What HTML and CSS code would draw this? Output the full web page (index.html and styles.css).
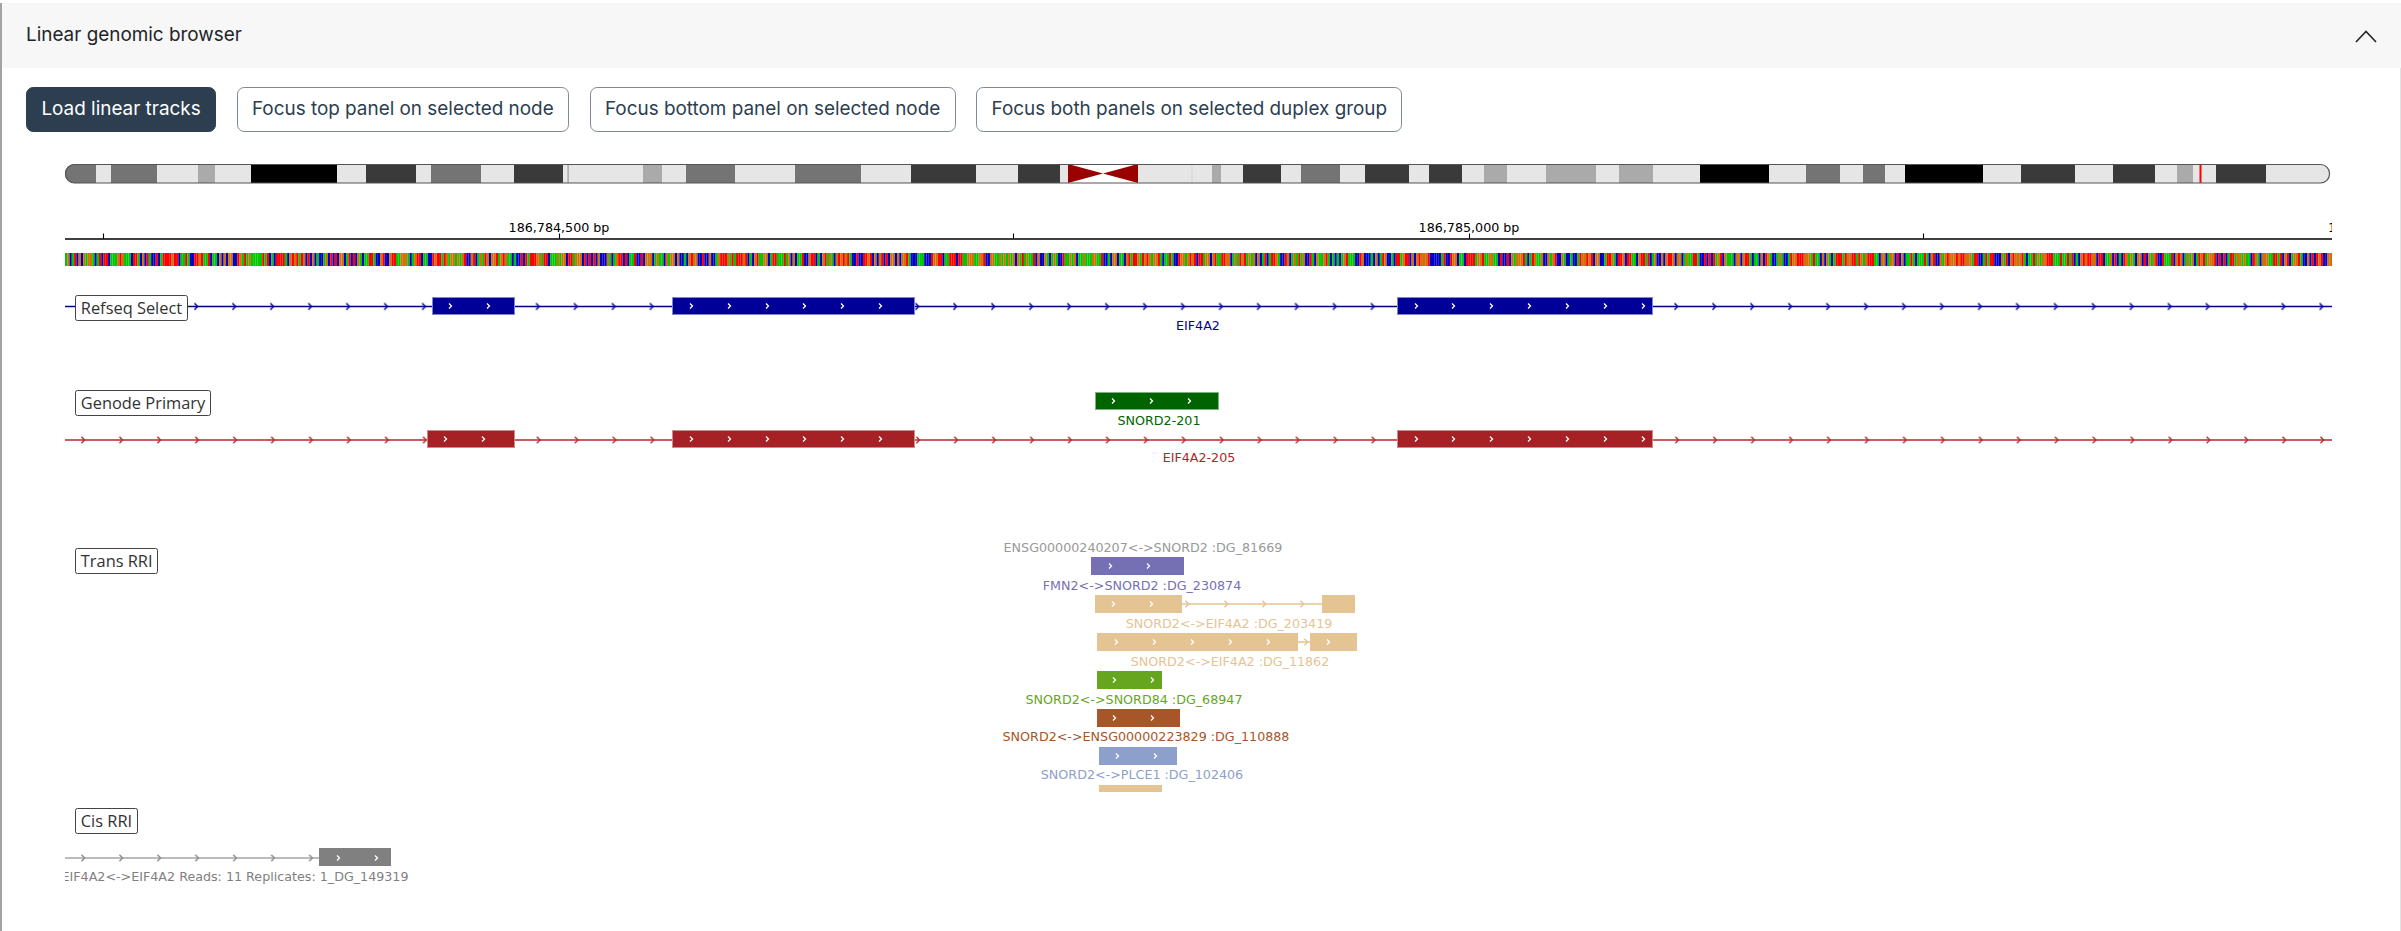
FILE: index.html
```html
<!DOCTYPE html>
<html lang="en">
<head>
<meta charset="utf-8">
<title>Linear genomic browser</title>
<link rel="stylesheet" href="styles.css">
</head>
<body>
<div class="accordion">
  <div class="acc-header">
    <span class="acc-title">Linear genomic browser</span>
    <svg class="chev" width="22" height="13" viewBox="0 0 22 13"><path d="M1 12 L11 1.5 L21 12" fill="none" stroke="#212529" stroke-width="1.6"/></svg>
  </div>
  <div class="acc-body">
    <div class="btn-row">
      <button class="btn btn-dark">Load linear tracks</button>
      <button class="btn btn-outline">Focus top panel on selected node</button>
      <button class="btn btn-outline">Focus bottom panel on selected node</button>
      <button class="btn btn-outline">Focus both panels on selected duplex group</button>
    </div>

    <div class="igv">
      <!-- ideogram -->
      <div class="track t-ideo">
        <svg width="2350" height="30" viewBox="26 159 2350 30">
          <defs>
            <clipPath id="ideoClip"><rect x="65" y="164" width="2265" height="19" rx="9.5"/></clipPath>
            <clipPath id="viewClip"><rect x="65" y="0" width="2267" height="2000"/></clipPath>
            <clipPath id="transClip"><rect x="65" y="538" width="2267" height="254"/></clipPath>
            <pattern id="arrBlue" patternUnits="userSpaceOnUse" x="193" y="302.5" width="37.95" height="8">
              <path d="M1.5 0.8 L4.6 4 L1.5 7.2" fill="none" stroke="#00008b" stroke-width="1.4"/>
            </pattern>
            <pattern id="arrRed" patternUnits="userSpaceOnUse" x="80" y="436" width="37.95" height="8">
              <path d="M1.5 0.8 L4.6 4 L1.5 7.2" fill="none" stroke="#b52a2e" stroke-width="1.4"/>
            </pattern>
            <pattern id="arrGray" patternUnits="userSpaceOnUse" x="80" y="854" width="37.95" height="8">
              <path d="M1.5 0.8 L4.6 4 L1.5 7.2" fill="none" stroke="#8a8a8a" stroke-width="1.4"/>
            </pattern>
          </defs>
          <g clip-path="url(#ideoClip)">
            <rect x="65" y="164" width="2265" height="19" fill="#e6e6e6"/>
            <g fill="#747474">
              <rect x="65" y="164" width="31" height="19"/>
              <rect x="111" y="164" width="46" height="19"/>
              <rect x="431" y="164" width="50" height="19"/>
              <rect x="686" y="164" width="49" height="19"/>
              <rect x="795" y="164" width="66" height="19"/>
              <rect x="1301" y="164" width="39" height="19"/>
              <rect x="1806" y="164" width="34" height="19"/>
              <rect x="1863" y="164" width="22" height="19"/>
            </g>
            <g fill="#aaaaaa">
              <rect x="198" y="164" width="17" height="19"/>
              <rect x="643" y="164" width="19" height="19"/>
              <rect x="1212" y="164" width="9" height="19"/>
              <rect x="1484" y="164" width="23" height="19"/>
              <rect x="1546" y="164" width="50" height="19"/>
              <rect x="1619" y="164" width="34" height="19"/>
              <rect x="2177" y="164" width="16" height="19"/>
            </g>
            <g fill="#000000">
              <rect x="251" y="164" width="86" height="19"/>
              <rect x="1700" y="164" width="69" height="19"/>
              <rect x="1905" y="164" width="78" height="19"/>
            </g>
            <g fill="#3a3a3a">
              <rect x="366" y="164" width="50" height="19"/>
              <rect x="514" y="164" width="49" height="19"/>
              <rect x="911" y="164" width="65" height="19"/>
              <rect x="1018" y="164" width="42" height="19"/>
              <rect x="1243" y="164" width="38" height="19"/>
              <rect x="1365" y="164" width="44" height="19"/>
              <rect x="1429" y="164" width="33" height="19"/>
              <rect x="2021" y="164" width="54" height="19"/>
              <rect x="2113" y="164" width="42" height="19"/>
              <rect x="2216" y="164" width="50" height="19"/>
            </g>
            <rect x="567.5" y="164" width="1.2" height="19" fill="#9a9a9a"/>
            <rect x="1191.5" y="164" width="1" height="19" fill="#d4d4d4"/>
            <rect x="1068" y="164" width="70" height="19" fill="#ffffff"/>
            <polygon points="1068,164 1068,183 1103,173.5" fill="#990000"/>
            <polygon points="1138,164 1138,183 1103,173.5" fill="#990000"/>
            <rect x="2199.5" y="164" width="2" height="19" fill="#ff0000"/>
          </g>
          <rect x="65.5" y="164.5" width="2264" height="18.5" rx="9" fill="none" stroke="#555555" stroke-width="1.2"/>
        </svg>
      </div>

      <!-- ruler -->
      <div class="track t-ruler">
        <svg width="2350" height="58" viewBox="26 189 2350 58">
          <g clip-path="url(#viewClip)" class="cv">
            <line x1="65" y1="239" x2="2332" y2="239" stroke="#000" stroke-width="1.4"/>
            <path d="M103.5 233.5V239M559.5 233.5V239M1013.5 233.5V239M1469.5 233.5V239M1923.5 233.5V239" stroke="#000" stroke-width="1.1"/>
            <text x="559" y="231.5" text-anchor="middle" fill="#000">186,784,500 bp</text>
            <text x="1469" y="231.5" text-anchor="middle" fill="#000">186,785,000 bp</text>
            <text x="2328" y="231.5" fill="#000">186,785,500 bp</text>
          </g>
        </svg>
      </div>

      <!-- sequence -->
      <div class="track t-seq">
        <svg width="2350" height="38" viewBox="26 247 2350 38">
          <g id="seq" clip-path="url(#viewClip)"></g>
        </svg>
      </div>

      <!-- Refseq Select -->
      <div class="track t-refseq">
        <svg width="2350" height="95" viewBox="26 285 2350 95">
          <g clip-path="url(#viewClip)" class="cv">
            <line x1="65" y1="306.5" x2="2332" y2="306.5" stroke="#000080" stroke-width="1.7"/>
            <rect x="65" y="302.5" width="2267" height="8" fill="url(#arrBlue)"/>
            <g fill="#000099" stroke="#8585cf" stroke-width="1">
              <rect x="432.5" y="297.5" width="82" height="17"/>
              <rect x="672.5" y="297.5" width="242" height="17"/>
              <rect x="1397.5" y="297.5" width="255" height="17"/>
            </g>
            <path fill="none" stroke="#fff" stroke-width="1.3" d="M449 303.5l2.5 2.5l-2.5 2.5M487 303.5l2.5 2.5l-2.5 2.5M690 303.5l2.5 2.5l-2.5 2.5M728 303.5l2.5 2.5l-2.5 2.5M766 303.5l2.5 2.5l-2.5 2.5M803 303.5l2.5 2.5l-2.5 2.5M841 303.5l2.5 2.5l-2.5 2.5M879 303.5l2.5 2.5l-2.5 2.5M1415 303.5l2.5 2.5l-2.5 2.5M1452 303.5l2.5 2.5l-2.5 2.5M1490 303.5l2.5 2.5l-2.5 2.5M1528 303.5l2.5 2.5l-2.5 2.5M1566 303.5l2.5 2.5l-2.5 2.5M1604 303.5l2.5 2.5l-2.5 2.5M1642 303.5l2.5 2.5l-2.5 2.5"/>
            <text x="1198" y="329.6" text-anchor="middle" fill="#000099">EIF4A2</text>
          </g>
        </svg>
        <div class="track-label">Refseq Select</div>
      </div>

      <!-- Genode Primary -->
      <div class="track t-genode">
        <svg width="2350" height="158" viewBox="26 380 2350 158">
          <g clip-path="url(#viewClip)" class="cv">
            <rect x="1095.5" y="392.5" width="123" height="17" fill="#006400" stroke="#7fb27f" stroke-width="1"/>
            <path fill="none" stroke="#fff" stroke-width="1.3" d="M1112 398.5l2.5 2.5l-2.5 2.5M1150 398.5l2.5 2.5l-2.5 2.5M1188 398.5l2.5 2.5l-2.5 2.5"/>
            <text x="1159" y="424.6" text-anchor="middle" fill="#006400">SNORD2-201</text>

            <line x1="65" y1="440" x2="2332" y2="440" stroke="#b52a2e" stroke-width="1.7"/>
            <rect x="65" y="436" width="2267" height="8" fill="url(#arrRed)"/>
            <g fill="#a52126" stroke="#cf8a8d" stroke-width="1">
              <rect x="427.5" y="430.5" width="87" height="17"/>
              <rect x="672.5" y="430.5" width="242" height="17"/>
              <rect x="1397.5" y="430.5" width="255" height="17"/>
            </g>
            <path fill="none" stroke="#fff" stroke-width="1.3" d="M444 436.5l2.5 2.5l-2.5 2.5M482 436.5l2.5 2.5l-2.5 2.5M690 436.5l2.5 2.5l-2.5 2.5M728 436.5l2.5 2.5l-2.5 2.5M766 436.5l2.5 2.5l-2.5 2.5M803 436.5l2.5 2.5l-2.5 2.5M841 436.5l2.5 2.5l-2.5 2.5M879 436.5l2.5 2.5l-2.5 2.5M1415 436.5l2.5 2.5l-2.5 2.5M1452 436.5l2.5 2.5l-2.5 2.5M1490 436.5l2.5 2.5l-2.5 2.5M1528 436.5l2.5 2.5l-2.5 2.5M1566 436.5l2.5 2.5l-2.5 2.5M1604 436.5l2.5 2.5l-2.5 2.5M1642 436.5l2.5 2.5l-2.5 2.5"/>
            <text x="1199" y="461.6" text-anchor="middle" fill="#b5242a">EIF4A2-205</text>
          </g>
        </svg>
        <div class="track-label">Genode Primary</div>
      </div>

      <!-- Trans RRI -->
      <div class="track t-trans">
        <svg width="2350" height="260" viewBox="26 538 2350 260">
          <g clip-path="url(#transClip)" class="cv">
            <text x="1143" y="551.6" text-anchor="middle" fill="#999999">ENSG00000240207&lt;-&gt;SNORD2 :DG_81669</text>

            <rect x="1091" y="557" width="93" height="18" fill="#7570b3"/>
            <path fill="none" stroke="#fff" stroke-width="1.3" d="M1109 563.5l2.5 2.5l-2.5 2.5M1147 563.5l2.5 2.5l-2.5 2.5"/>
            <text x="1142" y="589.6" text-anchor="middle" fill="#7570b3">FMN2&lt;-&gt;SNORD2 :DG_230874</text>

            <line x1="1182" y1="604" x2="1322" y2="604" stroke="#e5c494" stroke-width="1.6"/>
            <path fill="none" stroke="#e5c494" stroke-width="1.4" d="M1185.5 600.8L1188.6 604L1185.5 607.2M1224.5 600.8L1227.6 604L1224.5 607.2M1262.5 600.8L1265.6 604L1262.5 607.2M1300.5 600.8L1303.6 604L1300.5 607.2"/>
            <rect x="1095" y="595" width="87" height="18" fill="#e5c494"/>
            <rect x="1322" y="595" width="33" height="18" fill="#e5c494"/>
            <path fill="none" stroke="#fff" stroke-width="1.3" d="M1112 601.5l2.5 2.5l-2.5 2.5M1150 601.5l2.5 2.5l-2.5 2.5"/>
            <text x="1229" y="627.6" text-anchor="middle" fill="#e5c494">SNORD2&lt;-&gt;EIF4A2 :DG_203419</text>

            <line x1="1298" y1="642" x2="1310" y2="642" stroke="#e5c494" stroke-width="1.6"/>
            <path fill="none" stroke="#e5c494" stroke-width="1.4" d="M1304.5 638.8L1307.6 642L1304.5 645.2"/>
            <rect x="1097" y="633" width="201" height="18" fill="#e5c494"/>
            <rect x="1310" y="633" width="47" height="18" fill="#e5c494"/>
            <path fill="none" stroke="#fff" stroke-width="1.3" d="M1115 639.5l2.5 2.5l-2.5 2.5M1153 639.5l2.5 2.5l-2.5 2.5M1191 639.5l2.5 2.5l-2.5 2.5M1229 639.5l2.5 2.5l-2.5 2.5M1267 639.5l2.5 2.5l-2.5 2.5M1327 639.5l2.5 2.5l-2.5 2.5"/>
            <text x="1230" y="665.6" text-anchor="middle" fill="#e5c494">SNORD2&lt;-&gt;EIF4A2 :DG_11862</text>

            <rect x="1097" y="671" width="65" height="18" fill="#66a61e"/>
            <path fill="none" stroke="#fff" stroke-width="1.3" d="M1113 677.5l2.5 2.5l-2.5 2.5M1151 677.5l2.5 2.5l-2.5 2.5"/>
            <text x="1134" y="703.6" text-anchor="middle" fill="#66a61e">SNORD2&lt;-&gt;SNORD84 :DG_68947</text>

            <rect x="1097" y="709" width="83" height="18" fill="#a65628"/>
            <path fill="none" stroke="#fff" stroke-width="1.3" d="M1113 715.5l2.5 2.5l-2.5 2.5M1151 715.5l2.5 2.5l-2.5 2.5"/>
            <text x="1146" y="740.6" text-anchor="middle" fill="#a65628">SNORD2&lt;-&gt;ENSG00000223829 :DG_110888</text>

            <rect x="1099" y="747" width="78" height="18" fill="#8da0cb"/>
            <path fill="none" stroke="#fff" stroke-width="1.3" d="M1116 753.5l2.5 2.5l-2.5 2.5M1154 753.5l2.5 2.5l-2.5 2.5"/>
            <text x="1142" y="778.6" text-anchor="middle" fill="#8da0cb">SNORD2&lt;-&gt;PLCE1 :DG_102406</text>

            <rect x="1099" y="785" width="63" height="18" fill="#e5c494"/>
          </g>
        </svg>
        <div class="track-label">Trans RRI</div>
      </div>

      <!-- Cis RRI -->
      <div class="track t-cis">
        <svg width="2350" height="133" viewBox="26 798 2350 133">
          <g clip-path="url(#viewClip)" class="cv">
            <line x1="65" y1="858" x2="319" y2="858" stroke="#a6a6a6" stroke-width="1.6"/>
            <rect x="65" y="854" width="252" height="8" fill="url(#arrGray)"/>
            <rect x="319" y="848" width="72" height="18" fill="#808080"/>
            <path fill="none" stroke="#fff" stroke-width="1.3" d="M337 855.5l2.5 2.5l-2.5 2.5M375 855.5l2.5 2.5l-2.5 2.5"/>
            <text x="61.5" y="880.6" fill="#808080">EIF4A2&lt;-&gt;EIF4A2 Reads: 11 Replicates: 1_DG_149319</text>
          </g>
        </svg>
        <div class="track-label">Cis RRI</div>
      </div>
    </div>
  </div>
</div>
<script src="script.js"></script>
</body>
</html>
```

FILE: styles.css
```css
* { box-sizing: border-box; }

html, body {
  margin: 0;
  padding: 0;
  background: #ffffff;
  overflow: hidden;
}

body {
  font-family: Inter, "Noto Sans", sans-serif;
  color: #212529;
}

.accordion {
  margin-top: 3px;
  border-left: 2px solid #a3a3a3;
}

.acc-header {
  display: flex;
  align-items: center;
  justify-content: space-between;
  height: 65px;
  padding: 0 24px;
  background: #f7f7f7;
}

.acc-title {
  font-size: 18.9px;
  line-height: 28.8px;
  color: #212529;
}

.chev {
  display: block;
  margin-top: 1px;
}

.acc-body {
  padding: 19px 24px 0 24px;
  border-right: 1px solid #e2e2e2;
}

.btn-row {
  display: flex;
  gap: 20.5px;
}

.btn {
  font-family: Inter, "Noto Sans", sans-serif;
  font-size: 18.9px;
  line-height: 28.8px;
  padding: 7.2px 14.4px;
  border-radius: 7.2px;
  border: 1.2px solid;
  cursor: pointer;
  white-space: nowrap;
}

.btn-dark {
  background: #2c3e50;
  border-color: #2c3e50;
  color: #ffffff;
}

.btn-outline {
  background: #ffffff;
  border-color: #7d8a96;
  color: #2c3e50;
}

.igv {
  margin-top: 26.4px;
  display: flex;
  flex-direction: column;
}

.track {
  position: relative;
  flex: none;
}

.track svg {
  display: block;
}

.t-ideo { height: 30px; }
.t-ruler { height: 58px; }
.t-seq { height: 38px; }
.t-refseq { height: 95px; }
.t-genode { height: 158px; }
.t-trans { height: 260px; }
.t-cis { height: 133px; }

.cv {
  font-family: "DejaVu Sans", sans-serif;
  font-size: 12.7px;
}

.track-label {
  position: absolute;
  left: 49px;
  top: 10px;
  padding: 0 4.8px;
  font-family: "Open Sans", sans-serif;
  font-size: 16.4px;
  line-height: 24.4px;
  color: #333333;
  background: #ffffff;
  border: 1.2px solid #444444;
  border-radius: 2.4px;
  white-space: nowrap;
}
```

FILE: script.js
```js
(function () {
  var g = document.getElementById('seq');
  if (!g) return;
  var colors = ['rgb(0,200,0)', 'rgb(0,0,200)', 'rgb(255,0,0)', 'rgb(209,113,5)'];
  var seed = 20240611;
  function rand() {
    seed = (seed * 1103515245 + 12345) % 2147483648;
    return seed / 2147483648;
  }
  var n = 1000, x0 = 65, total = 2267, w = total / n;
  var out = [];
  for (var i = 0; i < n; i++) {
    var c = colors[Math.floor(rand() * 4)];
    out.push('<rect x="' + (x0 + i * w).toFixed(2) + '" y="253" width="' + w.toFixed(2) + '" height="13" fill="' + c + '"/>');
  }
  g.innerHTML = out.join('');
})();
```
